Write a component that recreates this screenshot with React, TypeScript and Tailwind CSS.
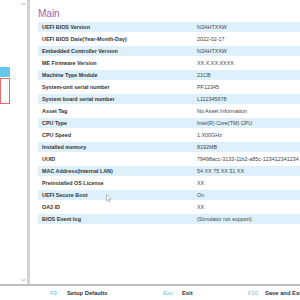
const rows: [string, string][] = [
  ["UEFI BIOS Version", "N3AHTXXW"],
  ["UEFI BIOS Date(Year-Month-Day)", "2022-02-17"],
  ["Embedded Controller Version", "N3AHTXXW"],
  ["ME Firmware Version", "XX.X.XX.XXXX"],
  ["Machine Type Module", "21CB"],
  ["System-unit serial number", "PF12345"],
  ["System board serial number", "L112345678"],
  ["Asset Tag", "No Asset Information"],
  ["CPU Type", "Intel(R) Core(TM) CPU"],
  ["CPU Speed", "1.X00GHz"],
  ["Installed memory", "8192MB"],
  ["UUID", "79498acc-3133-11b2-a85c-123412341234"],
  ["MAC Address(Internal LAN)", "54 XX 75 XX 31 XX"],
  ["Preinstalled OS License", "XX"],
  ["UEFI Secure Boot", "On"],
  ["OA3 ID", "XX"],
  ["BIOS Event log", "(Simulator not support)"],
];

function Chevron({ down }: { down?: boolean }) {
  return (
    <svg width="5" height="4" viewBox="0 0 5 4" className="block">
      <path
        d={down ? "M0.5 1 L2.5 3 L4.5 1" : "M0.5 3 L2.5 1 L4.5 3"}
        fill="none"
        stroke="#9a9a9a"
        strokeWidth="0.8"
      />
    </svg>
  );
}

export default function App() {
  return (
    <div className="relative flex h-[300px] w-[300px] flex-col overflow-hidden bg-white font-['Liberation_Sans',Arial,sans-serif]">
      <div className="flex h-[284px]">
        {/* left menu */}
        <div className="flex w-[27px] flex-col">
          <div className="flex justify-end pr-[1px] pt-[2px]">
            <Chevron />
          </div>
          <div className="mt-[61px] h-[10px] w-[10px] bg-[#66c8e8]" />
          <div className="mt-[1px] h-[26px] w-[10px] border border-[#ef6b6b] bg-white" />
          <div className="flex-1" />
          <div className="flex justify-end pb-[2px] pr-[1px]">
            <Chevron down />
          </div>
        </div>
        <div className="w-[3px] bg-[#d2d2d2]" />

        {/* main panel */}
        <div className="min-w-0 flex-1 pl-[8px] pt-[8px]">
          <div className="mb-[2px] h-[12px] text-[10px] font-medium leading-[12px] text-[#8a66bd]">
            Main
          </div>
          {rows.map(([label, value], i) => (
            <div key={label} className="h-[12px] pb-[2px]">
              <div
                className={
                  "flex h-[10px] items-center whitespace-nowrap text-[5.4px] " +
                  (i % 2 === 0 ? "bg-[#ddf0fb]" : "bg-white")
                }
              >
                <span className="w-[159px] shrink-0 pl-[4px] font-bold text-[#333]">
                  {label}
                </span>
                <span className="text-[#444]">{value}</span>
              </div>
            </div>
          ))}
        </div>
      </div>

      <div className="h-[2px] bg-[#bdbdbd]" />

      <div className="flex flex-1 items-center whitespace-nowrap pl-[50px] text-[5.8px]">
        <div className="flex w-[113px] shrink-0">
          <span className="w-[17px] text-[#5cc5e8]">F9</span>
          <span className="font-bold text-[#333]">Setup Defaults</span>
        </div>
        <div className="flex w-[85px] shrink-0">
          <span className="w-[19px] text-[#5cc5e8]">Esc</span>
          <span className="font-bold text-[#333]">Exit</span>
        </div>
        <div className="flex shrink-0">
          <span className="w-[17px] text-[#5cc5e8]">F10</span>
          <span className="font-bold text-[#333]">Save and Exit</span>
        </div>
      </div>

      {/* mouse pointer */}
      <svg
        width="6"
        height="9"
        viewBox="0 0 6 9"
        className="absolute left-[106px] top-[194px]"
      >
        <path
          d="M0.5 0.5 L0.5 7 L2 5.6 L3.2 8.2 L4 7.8 L2.9 5.3 L5 5.3 Z"
          fill="#fff"
          stroke="#9a9a9a"
          strokeWidth="0.6"
        />
      </svg>
    </div>
  );
}
